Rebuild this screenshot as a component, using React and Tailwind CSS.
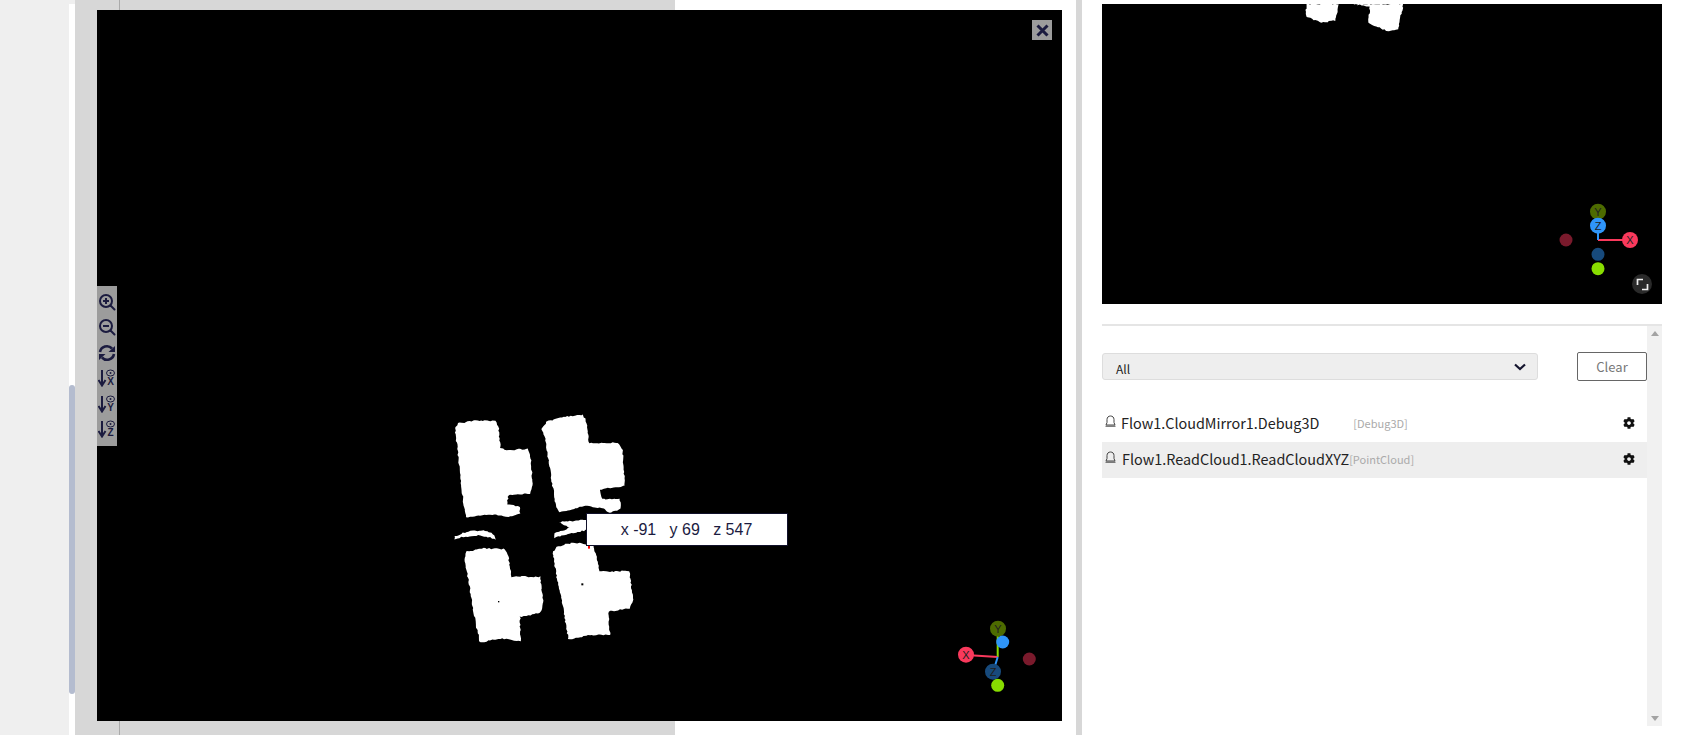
import React from 'react';
import { FaCog } from 'react-icons/fa';

const ICON = '#1b1b3f';

// wobble the edges a bit so the blobs look like scanned points
const rough = (pts, seed = 1) => {
    let s = seed * 7919;
    const rnd = () => {
        s = (s * 16807) % 2147483647;
        return (s % 1000) / 1000 - 0.5;
    };
    const out = [];
    pts.forEach((p, i) => {
        const q = pts[(i + 1) % pts.length];
        const n = Math.max(1, Math.round(Math.hypot(q[0] - p[0], q[1] - p[1]) / 6));
        for (let k = 0; k < n; k++) {
            out.push(`${(p[0] + ((q[0] - p[0]) * k) / n + rnd() * 4).toFixed(1)},${(p[1] + ((q[1] - p[1]) * k) / n + rnd() * 4).toFixed(1)}`);
        }
    });
    return out.join(' ');
};

const blobs = [
    [[75, 85], [85, 70], [130, 62], [195, 62], [205, 80], [212, 145], [225, 150], [295, 147], [303, 175], [308, 250], [300, 280], [235, 285], [232, 312], [270, 320], [270, 340], [240, 350], [180, 343], [110, 352], [100, 310], [88, 200]],
    [[335, 85], [350, 65], [400, 50], [460, 45], [470, 70], [478, 130], [565, 128], [578, 150], [585, 258], [510, 268], [515, 298], [570, 295], [572, 325], [540, 340], [520, 325], [460, 318], [390, 338], [378, 320], [355, 180], [345, 115]],
    [[102, 480], [110, 455], [160, 445], [225, 447], [235, 470], [245, 530], [330, 530], [340, 605], [330, 640], [270, 650], [272, 725], [210, 715], [150, 728], [135, 660], [115, 540]],
    [[368, 460], [380, 440], [430, 428], [490, 435], [500, 470], [510, 515], [598, 513], [610, 600], [600, 625], [535, 635], [540, 705], [480, 705], [415, 718], [395, 600], [378, 520]],
    [[75, 408], [110, 395], [160, 390], [195, 405], [197, 418], [150, 405], [100, 410], [75, 417]],
    [[385, 367], [480, 358], [480, 388], [372, 413], [375, 400], [420, 382]],
];

const topBlobs = [
    [[858, 12], [957, 12], [945, 62], [905, 68], [858, 50]],
    [[1000, 12], [1050, 20], [1045, 70], [1100, 92], [1135, 90], [1150, 12]],
];

const Dot = ({ cx, cy, r, fill, label }) => (
    <g>
        <circle cx={cx} cy={cy} r={r} fill={fill} />
        {label && (
            <text x={cx} y={cy + 4} textAnchor="middle" fontSize="11" fontFamily="Liberation Sans" fill="#202020">
                {label}
            </text>
        )}
    </g>
);

const ZoomIcon = ({ minus }) => (
    <svg width="18" height="18" viewBox="0 0 18 18" fill="none" stroke={ICON} strokeWidth="2">
        <circle cx="8" cy="8" r="6" />
        <path d="M12.5 12.5L16.5 16.5" strokeLinecap="round" />
        <path d={minus ? 'M5 8H11' : 'M5 8H11M8 5V11'} />
    </svg>
);

const RefreshIcon = () => (
    <svg width="18" height="18" viewBox="0 0 18 18" fill="none" stroke={ICON} strokeWidth="2.6">
        <path d="M2 8A7 7 0 0 1 14 4.5" />
        <path d="M16 10A7 7 0 0 1 4 13.5" />
        <path d="M17 2V8H10.5Z M1 16V10H7.5Z" fill={ICON} stroke="none" />
    </svg>
);

const AxisIcon = ({ axis }) => (
    <svg width="18" height="18" viewBox="0 0 18 18" fill="none" stroke={ICON}>
        <path d="M4 1V15" strokeWidth="2" />
        <path d="M0.5 11L4 16.5L7.5 11" strokeWidth="2" />
        <ellipse cx="12.5" cy="4" rx="4" ry="3" strokeWidth="1" />
        <circle cx="12.5" cy="4" r="1" fill={ICON} stroke="none" />
        <text x="12.5" y="16" textAnchor="middle" fontSize="10" fontWeight="700" fontFamily="Liberation Sans" fill={ICON} stroke="none">
            {axis}
        </text>
    </svg>
);

const BellIcon = () => (
    <svg width="11" height="12" viewBox="0 0 11 12" fill="none" stroke="#444" strokeWidth="1">
        <path d="M1 10L2 7.5V4.5C2 2.3 3.5 1 5.5 1C7.5 1 9 2.3 9 4.5V7.5L10 10Z" />
        <path d="M0.5 11.2H10.5" />
    </svg>
);

const LogRow = ({ name, tag, tagClass, active }) => (
    <div className={`flex h-[36px] items-center ${active ? 'bg-[#eeeeee]' : ''}`}>
        <span className="mb-[7px] ml-[3px] w-[11px] flex-none">
            <BellIcon />
        </span>
        <span className={`${active ? 'ml-[6px]' : 'ml-[5px]'} mb-[2px] text-[14.4px] text-[#222]`}>{name}</span>
        <span className={`mb-[2px] text-[11px] text-[#aaa] ${tagClass}`}>{tag}</span>
        <FaCog className="mb-[2px] ml-auto mr-[12px] text-[12px] text-[#111]" />
    </div>
);

const App = () => {
    return (
        <div className="relative flex h-[735px] w-full overflow-hidden bg-white font-['Noto_Sans_CJK_SC','Noto_Sans',sans-serif]">
            {/* left nav */}
            <div className="w-[69px] flex-none bg-[#efefef]" />
            <div className="flex w-[6px] flex-none flex-col bg-white">
                <div className="h-[4px] bg-[#efefef]" />
                <div className="mt-[381px] h-[309px] rounded-t-[3px] rounded-b-[3px] bg-[#b4bccf]" />
            </div>

            {/* page behind the overlay */}
            <div className="flex w-[600px] flex-none bg-[#d7d7d7]">
                <div className="w-[45px] border-r border-[#aaaaaa]" />
            </div>
            <div className="flex-1" />
            <div className="w-[6px] flex-none bg-[#d7d7d7]" />

            {/* right panel */}
            <div className="flex w-[600px] flex-none flex-col pt-[4px] pl-[20px] pr-[20px]">
                <div className="relative h-[300px] flex-none bg-black">
                    <svg className="absolute left-[-82px] top-[-4px]" width="400" height="40" viewBox="0 0 1200 120">
                        {topBlobs.map((b, i) => (
                            <polygon key={i} points={rough(b, i + 3)} fill="#fff" />
                        ))}
                    </svg>
                    <svg className="absolute left-[440px] top-[196px]" width="120" height="100" viewBox="1542 200 120 100">
                        <path d="M1598 240H1630" stroke="#f9395c" strokeWidth="2" />
                        <path d="M1598 240V226" stroke="#2f95f9" strokeWidth="2" />
                        <Dot cx={1598} cy={211.7} r={8} fill="#4d6b00" label="Y" />
                        <Dot cx={1598} cy={225.7} r={8} fill="#2f95f9" label="Z" />
                        <Dot cx={1630} cy={240} r={8} fill="#f9395c" label="X" />
                        <Dot cx={1566} cy={240} r={6.5} fill="#7a1a2c" />
                        <Dot cx={1598} cy={254.3} r={6.5} fill="#174a7c" />
                        <Dot cx={1598} cy={268.7} r={6.5} fill="#88dd00" />
                    </svg>
                    <button className="absolute left-[530px] top-[270px] flex h-[20px] w-[20px] items-center justify-center rounded-full bg-[#2a2a2a]">
                        <svg width="13" height="13" viewBox="0 0 13 13" fill="none" stroke="#eee" strokeWidth="1.7">
                            <path d="M7 1.5H1.5V7" />
                            <path d="M6 11.5H11.5V6" />
                        </svg>
                    </button>
                </div>

                <div className="mt-[20px] h-[2px] flex-none bg-[#e5e5e5]" />

                <div className="flex h-[400px] flex-none">
                    <div className="flex-1">
                        <div className="flex items-center pt-[26px]">
                            <div className="flex h-[27px] w-[436px] items-center justify-between rounded-[3px] border border-[#dddddd] bg-[#eeeeee] pl-[13px] pr-[11px]">
                                <span className="mt-[4px] text-[12px] text-[#222]">All</span>
                                <svg width="12" height="8" viewBox="0 0 12 8" fill="none" stroke="#15152e" strokeWidth="2.2">
                                    <path d="M1 1.5L6 6L11 1.5" />
                                </svg>
                            </div>
                            <button className="ml-auto h-[29px] w-[70px] rounded-[2px] border border-[#666666] text-[13px] text-[#777777]">
                                Clear
                            </button>
                        </div>
                        <div className="mt-[25px]">
                            <LogRow name="Flow1.CloudMirror1.Debug3D" tag="[Debug3D]" tagClass="ml-[34px]" />
                            <LogRow name="Flow1.ReadCloud1.ReadCloudXYZ" tag="[PointCloud]" tagClass="ml-0" active />
                        </div>
                    </div>
                    <div className="flex w-[15px] flex-none flex-col items-center justify-between bg-[#f1f1f1] py-[5px]">
                        <div className="h-0 w-0 border-x-[4px] border-b-[5px] border-x-transparent border-b-[#a3a3a3]" />
                        <div className="h-0 w-0 border-x-[4px] border-t-[5px] border-x-transparent border-t-[#a3a3a3]" />
                    </div>
                </div>
            </div>

            {/* point cloud overlay */}
            <div className="absolute left-[97px] top-[10px] h-[711px] w-[965px] bg-black">
                <svg className="absolute left-[333px] top-[390px]" width="380" height="260" viewBox="0 0 1140 780">
                    {blobs.map((b, i) => (
                        <polygon key={i} points={rough(b, i + 1)} fill="#fff" />
                    ))}
                    <rect x="204" y="603" width="4" height="4" fill="#000" />
                    <rect x="454" y="550" width="6" height="6" fill="#000" />
                    <rect x="474" y="438" width="6" height="8" fill="#f00" />
                </svg>

                <div className="absolute left-0 top-[276px] flex h-[160px] w-[20px] flex-col items-center bg-[#9c9c9c] pt-[3px]">
                    <div className="flex h-[25.5px] items-center"><ZoomIcon /></div>
                    <div className="flex h-[25.5px] items-center"><ZoomIcon minus /></div>
                    <div className="flex h-[25.5px] items-center"><RefreshIcon /></div>
                    <div className="flex h-[25.5px] items-center"><AxisIcon axis="X" /></div>
                    <div className="flex h-[25.5px] items-center"><AxisIcon axis="Y" /></div>
                    <div className="flex h-[25.5px] items-center"><AxisIcon axis="Z" /></div>
                </div>

                <button className="absolute left-[935px] top-[10px] flex h-[20px] w-[20px] items-center justify-center bg-[#9c9c9c]">
                    <svg width="13" height="13" viewBox="0 0 13 13" stroke={ICON} strokeWidth="3">
                        <path d="M1.5 1.5L11.5 11.5M11.5 1.5L1.5 11.5" />
                    </svg>
                </button>

                <div className="absolute left-[489px] top-[503px] flex h-[33px] w-[202px] items-center justify-center border border-[#10102a] bg-white pr-[1px] font-['Liberation_Sans',sans-serif] text-[16px] text-[#1b1b3f]">
                    <span className="whitespace-pre">x -91   y 69   z 547</span>
                </div>

                <svg className="absolute left-[845px] top-[600px]" width="120" height="90" viewBox="942 610 120 90">
                    <path d="M997.7 657V630" stroke="#88dd00" strokeWidth="2" />
                    <path d="M997.7 657L966 655" stroke="#f9395c" strokeWidth="2" />
                    <path d="M997.7 657L993 672" stroke="#2f95f9" strokeWidth="2" />
                    <Dot cx={998} cy={628.7} r={8} fill="#4d6b00" label="Y" />
                    <Dot cx={1002.7} cy={642} r={6.5} fill="#2f95f9" />
                    <Dot cx={966} cy={654.7} r={8} fill="#f9395c" label="X" />
                    <Dot cx={1029.3} cy={659} r={6.5} fill="#7a1a2c" />
                    <Dot cx={993} cy={671.7} r={8} fill="#174a7c" label="Z" />
                    <Dot cx={997.7} cy={685.3} r={6.5} fill="#88dd00" />
                </svg>
            </div>
        </div>
    );
};

export default App;
